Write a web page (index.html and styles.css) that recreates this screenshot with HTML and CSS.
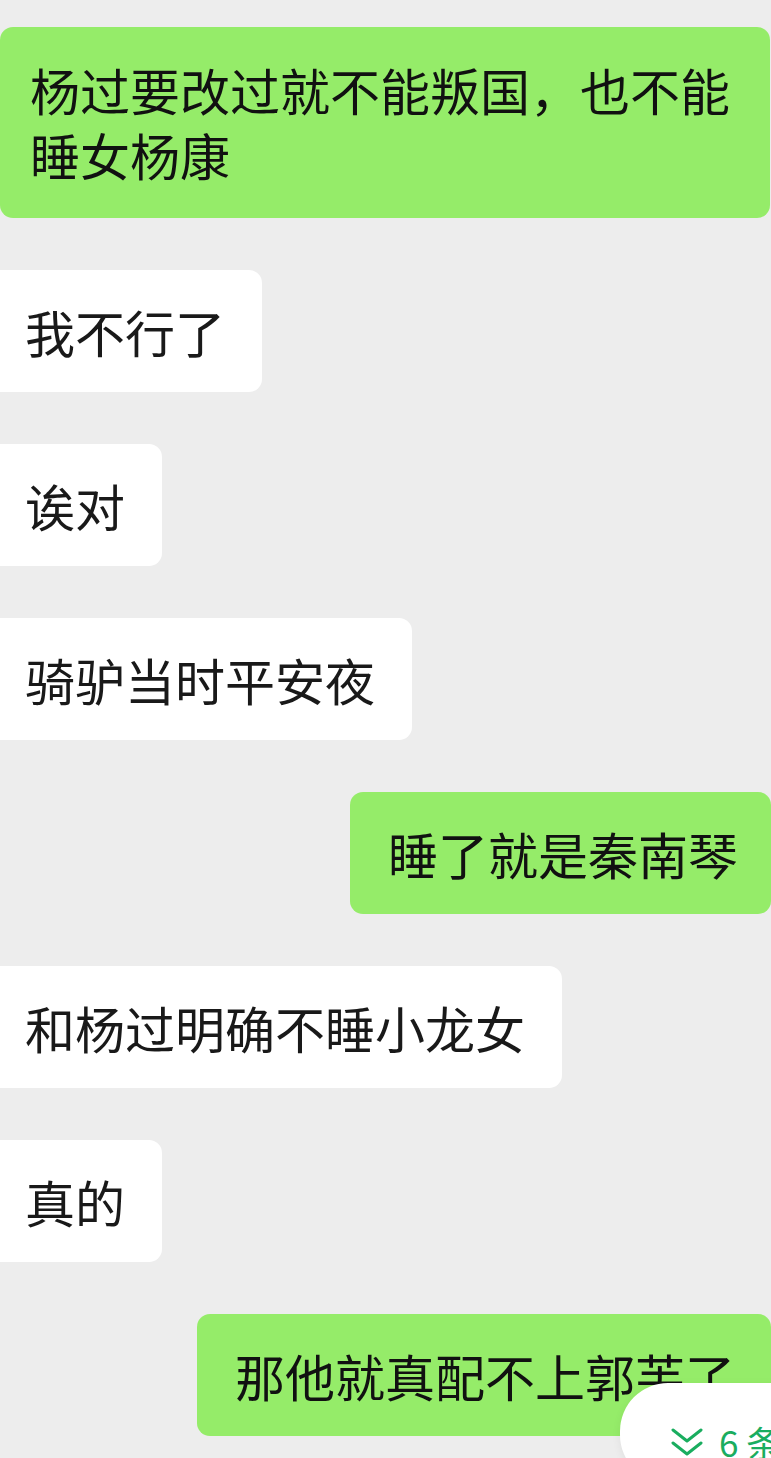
FILE: index.html
```html
<!DOCTYPE html>
<html lang="zh-CN">
<head>
  <meta charset="UTF-8">
  <meta name="viewport" content="width=device-width, initial-scale=1.0">
  <title>聊天</title>
  <link rel="stylesheet" href="styles.css">
</head>
<body>
  <div class="chat">
    <div class="bubble sent first">杨过要改过就不能叛国，也不能睡女杨康</div>
    <div class="bubble received">我不行了</div>
    <div class="bubble received">诶对</div>
    <div class="bubble received">骑驴当时平安夜</div>
    <div class="bubble sent">睡了就是秦南琴</div>
    <div class="bubble received">和杨过明确不睡小龙女</div>
    <div class="bubble received">真的</div>
    <div class="bubble sent last">那他就真配不上郭芙了</div>
  </div>

  <div class="new-msgs">
    <svg class="chevrons" width="32" height="30" viewBox="0 0 32 30">
      <path d="M2 2 L16 13 L30 2" fill="none" stroke="#1aad5f" stroke-width="3" stroke-linecap="round" stroke-linejoin="round"/>
      <path d="M2 15 L16 26 L30 15" fill="none" stroke="#1aad5f" stroke-width="3" stroke-linecap="round" stroke-linejoin="round"/>
    </svg>
    <span class="count">6 条新消息</span>
  </div>
</body>
</html>
```

FILE: styles.css
```css
* {
  margin: 0;
  padding: 0;
  box-sizing: border-box;
}

body {
  font-family: "Noto Sans CJK SC", "Noto Sans", sans-serif;
  background-color: #ededed;
  height: 1458px;
  overflow: hidden;
  position: relative;
}

.chat {
  display: flex;
  flex-direction: column;
  gap: 52px;
  padding-top: 27px;
}

.bubble {
  font-size: 50px;
  line-height: 65px;
  color: #191919;
  padding: 29px 40px 28px 38px;
  border-radius: 13px;
  white-space: nowrap;
}

.received {
  align-self: flex-start;
  background-color: #ffffff;
  margin-left: -13px;
  padding-right: 37px;
}

.sent {
  align-self: flex-end;
  background-color: #95ec69;
  color: #111;
  padding-right: 33px;
}

.last {
  padding-right: 36px;
}

.first {
  white-space: normal;
  width: 770px;
  margin-right: 1px;
  padding: 30px 35px 31px 30px;
}

.new-msgs {
  position: absolute;
  left: 620px;
  top: 1383px;
  width: 260px;
  height: 100px;
  background-color: #ffffff;
  border-radius: 48px;
  box-shadow: 0 2px 10px rgba(0, 0, 0, 0.06);
  display: flex;
  align-items: flex-start;
  padding: 41px 0 0 51px;
  gap: 16px;
}

.chevrons {
  flex-shrink: 0;
  margin-top: 4px;
}

.count {
  font-family: "Noto Sans CJK SC", sans-serif;
  font-size: 35px;
  line-height: 1;
  color: #1aad5f;
  white-space: nowrap;
}
```
